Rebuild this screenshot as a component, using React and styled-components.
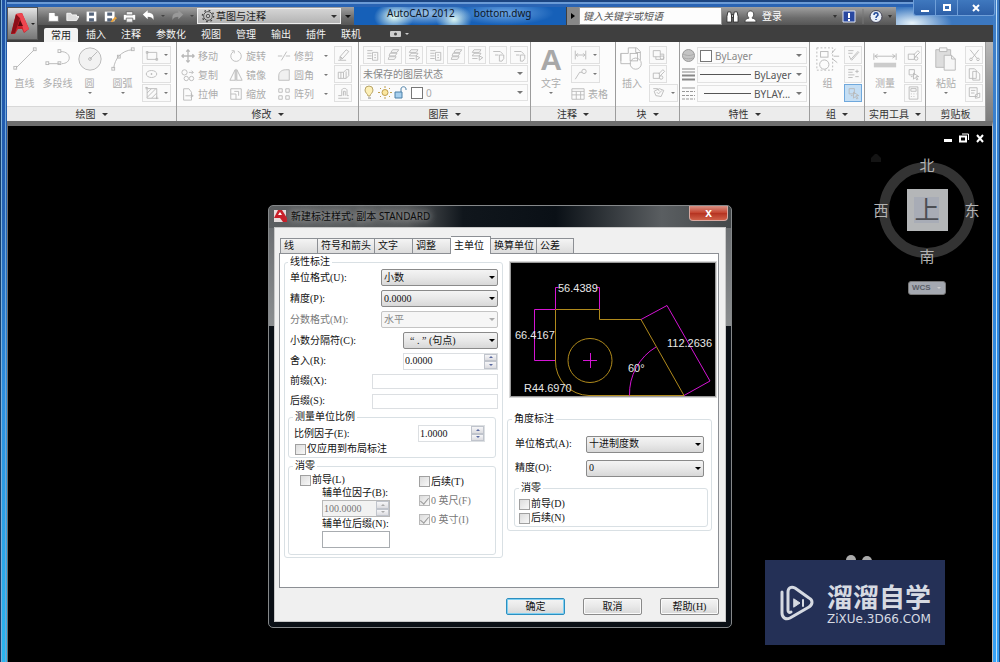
import React from 'react'
import styled, { createGlobalStyle, css } from 'styled-components'

const uiFont = '"Noto Sans", "Noto Sans CJK SC", sans-serif'
const dialogFont = '"Liberation Serif", "Noto Sans CJK SC", serif'

const GlobalStyle = createGlobalStyle`
  * {
    box-sizing: border-box;
  }
  body {
    margin: 0;
    background: #000;
    font: 10px/14px ${uiFont};
  }
  button, input, select {
    font: inherit;
    color: inherit;
    margin: 0;
    padding: 0;
    border: 0;
    background: none;
    border-radius: 0;
    outline: none;
  }
  select {
    appearance: none;
  }
  fieldset {
    margin: 0;
    min-width: 0;
  }
  svg {
    display: block;
    flex: none;
  }
`

/* ---------- application window ---------- */

const Window = styled.div`
  position: relative;
  display: flex;
  flex-direction: column;
  min-height: 100vh;
  padding: 7px 7px 0;
  background:
    linear-gradient(90deg, #17406f 1px, #7fb2dc 1px, #7fb2dc 2px, transparent 2px, transparent 5px, #6fa6d8 5px, #6fa6d8 6px, transparent 6px) left / 7px 100% no-repeat,
    linear-gradient(90deg, transparent 3px, #bfe0f8 3px, #bfe0f8 4px, transparent 4px, transparent 6px, #1d4a80 6px) right / 7px 100% no-repeat,
    linear-gradient(#3f7cc4, #2f86dc 45%, #36a2f6) right / 7px 100% no-repeat,
    linear-gradient(#1f52a4, #2462b4 32%, #2d90e0 60%, #2ab6ee) left / 7px 100% no-repeat,
    linear-gradient(#1b4480 2px, #6b9bd6 2px, #6b9bd6 4px, #2a64b4 4px);
`

const Header = styled.header`
  display: grid;
  grid-template-columns: 31px 1fr;
  grid-template-rows: 18px 17px;
  background: #3f3f3f;
`

const AppButton = styled.button`
  grid-row: 1 / 3;
  height: 33px;
  display: flex;
  align-items: center;
  gap: 1px;
  padding-left: 2px;
  border: 1px solid #555;
  background: linear-gradient(#e4e4e4, #a2a2a2 50%, #777);
`

const TitleRow = styled.div`
  display: flex;
  min-width: 0;
`

const GreyStrip = styled.div`
  display: flex;
  align-items: center;
  width: ${props => props.$width}px;
  padding-left: ${props => props.$pad || 0}px;
  gap: ${props => props.$gap || 0}px;
  color: #fff;
  background: linear-gradient(#a0a0a0, #6c6c6c 60%, #565656);

  a {
    color: inherit;
    text-decoration: none;
  }
`

const QuickButton = styled.button`
  width: 19px;
  height: 16px;
  display: flex;
  align-items: center;
  justify-content: center;
`

const HistoryMenu = styled.button`
  width: 10px;
  height: 16px;
  display: flex;
  align-items: center;
  justify-content: center;
`

const Workspace = styled.label`
  flex: 1;
  display: flex;
  align-items: center;
  height: 16px;
  padding: 0 3px;
  gap: 1px;
  color: #222;
  border: 1px solid #eee;
  background: linear-gradient(#d4d4d4, #b4b4b4);

  select {
    flex: 1;
    min-width: 0;
    font-size: 10px;
  }
`

const More = styled.button`
  width: 13px;
  height: 17px;
  display: flex;
  align-items: center;
  justify-content: center;
  color: #111;
`

const Caption = styled.div`
  flex: 1;
  display: flex;
  gap: 19px;
  padding-left: 33px;
  font-size: 10px;
  line-height: 12px;
  color: #0c1626;
  white-space: nowrap;
  background:
    radial-gradient(ellipse 20px 14px at 40px 10px, #e2fbf4, transparent),
    radial-gradient(ellipse 42px 12px at 70px 6px, #9fc4ea, transparent),
    radial-gradient(ellipse 18px 14px at 100px 12px, #e2fbf4, transparent),
    radial-gradient(ellipse 50px 12px at 150px 6px, #6fa6e2, transparent),
    #1660b8;
`

const Search = styled.input`
  width: 143px;
  height: 18px;
  padding-left: 3px;
  background: #fdfdfd;
  border: 1px solid #999;

  &::placeholder {
    color: #555;
    font-style: italic;
    opacity: 1;
  }
`

const Glass = styled.div`
  width: 97px;
  background:
    radial-gradient(ellipse 40px 16px at 16px 16px, #e8f4fa, transparent),
    #3c78c0;
`

const WindowControls = styled.div`
  position: absolute;
  top: 0;
  right: 5px;
  display: flex;
  border: 1px solid #6f9fd8;
  border-top: 0;
  border-radius: 0 0 3px 3px;
  overflow: hidden;

  button {
    width: 22px;
    height: 15px;
    display: flex;
    align-items: center;
    justify-content: center;
    background: linear-gradient(#3f78be, #2d60a8);
    border-right: 1px solid #6f9fd8;
  }
  button:last-child {
    width: 36px;
    border-right: 0;
  }
`

const Tabs = styled.nav`
  display: flex;
  padding-left: 6px;
  color: #f4f4f4;
`

const RibbonTab = styled.button`
  height: ${props => (props.$active ? 14 : 17)}px;
  padding: 0 7px 0 ${props => (props.$active ? 7 : 8)}px;
  align-self: flex-end;
  line-height: 14px;
  white-space: nowrap;
  border-radius: 2px 2px 0 0;
  ${props => props.$active && css`
    color: #222;
    background: #f4f4f4;
  `}
`

const PlayTab = styled.button`
  display: flex;
  align-items: center;
  gap: 4px;
  padding-left: 22px;
`

const Ribbon = styled.div`
  display: flex;
  height: 79px;
  background: linear-gradient(#b8b8b8, #7c7c7c);
`

const PanelBox = styled.section`
  display: flex;
  flex-direction: column;
  flex: none;
  width: ${props => props.$width}px;
  border-right: 1px solid #9c9c9c;
  background: #fcfcfc;
`

const PanelBody = styled.div`
  flex: 1;
  display: flex;
  padding: 4px 0 0 ${props => props.$pad}px;
  color: #acacac;
  white-space: nowrap;
`

const PanelTitle = styled.button`
  height: 15px;
  display: flex;
  align-items: center;
  justify-content: center;
  gap: 6px;
  color: #333;
  background: #ececec;
  border-top: 1px solid #d8d8d8;
`

const Caret = styled.i`
  flex: none;
  border: ${props => props.$size || 2}px solid transparent;
  border-top-color: ${props => props.$color || '#777'};
  border-bottom: 0;
`

const BigTool = styled.button`
  width: ${props => props.$width || 33}px;
  height: 56px;
  display: flex;
  flex-direction: column;
  align-items: center;
  line-height: 12px;

  > span {
    margin: 5px 0 3px;
  }
`

const BigLetter = styled.b`
  height: 26px;
  font: bold 30px/28px "Liberation Sans", sans-serif;
  color: #a8a8a8;
`

const ToolGrid = styled.div`
  display: grid;
  grid-template-columns: ${props => props.$columns};
  grid-auto-rows: 19px;
  align-content: start;
  margin-left: ${props => props.$left || 0}px;
`

const TextTool = styled.button`
  display: flex;
  align-items: center;
  gap: 3px;

  i {
    margin-left: 7px;
  }
`

const Square = styled.button`
  display: flex;
  align-items: center;
  justify-content: center;
  width: ${props => (props.$split ? 29 : 18)}px;
  height: 18px;
  border: 1px solid ${props => (props.$on ? '#6fa8dc' : '#e0e0e0')};
  background: ${props => (props.$on ? '#c4def4' : '#fafafa')};

  svg {
    width: ${props => (props.$split ? 17 : 15)}px;
  }
  i {
    margin: 0 2px 0 4px;
  }
`

const Rows = styled.div`
  flex: 1;
  display: grid;
  grid-auto-rows: 19px;
  align-content: start;
`

const IconStrip = styled.div`
  display: flex;
  gap: 3px;
  padding-left: 3px;
`

const Field = styled.label`
  height: 17px;
  margin-right: 2px;
  display: flex;
  align-items: center;
  gap: 3px;
  padding: 0 4px 0 2px;
  color: ${props => props.$color || '#888'};
  border: 1px solid #e2e2e2;
  background: #fbfbfb;

  select {
    flex: 1;
    min-width: 0;
  }
`

const Swatch = styled.span`
  width: 12px;
  height: 12px;
  border: 1px solid #777;
  background: #fff;
`

const Line = styled.span`
  width: ${props => props.$width}px;
  height: 1px;
  margin-left: ${props => props.$left || 0}px;
  background: #555;
`

const PropRow = styled.div`
  display: grid;
  grid-template-columns: 14px 1fr;
  align-items: center;
  gap: 1px;
`

/* ---------- drawing area ---------- */

const Canvas = styled.main`
  position: relative;
  flex: 1;
  min-height: 510px;
  border: solid #6f6f6f;
  border-width: 5px 1px 0;
  border-right-color: #c0b8b0;
  background: #000;
`

const DocControls = styled.div`
  position: absolute;
  top: 6px;
  right: 6px;
  display: flex;
  gap: 4px;

  button {
    width: 12px;
    height: 12px;
  }
`

const Compass = styled.div`
  position: absolute;
  top: 28px;
  right: 8px;
  width: 114px;
  color: #aaa;
`

const WcsButton = styled.button`
  display: flex;
  align-items: center;
  width: 38px;
  height: 14px;
  margin: 13px auto 0;
  padding-left: 3px;
  gap: 6px;
  border: 1px solid #777;
  border-radius: 3px;
  background: #a4a8b0;
  color: #5c6068;
  font: bold 8px/12px "Liberation Sans", sans-serif;
`

const Watermark = styled.div`
  position: absolute;
  right: 47px;
  bottom: 17px;
  width: 180px;
  height: 85px;
  display: flex;
  align-items: center;
  gap: 12px;
  padding-left: 14px;
  background: #243056;
  color: #d6dae2;
`

const Brand = styled.div`
  font: bold 26px/30px "Noto Sans CJK SC", sans-serif;
  white-space: nowrap;

  small {
    display: block;
    padding-top: 2px;
    font: 12px/12px "DejaVu Sans", sans-serif;
  }
`

const Dots = styled.svg`
  position: absolute;
  right: 118px;
  bottom: 98px;
`

/* ---------- dialog ---------- */

const Dialog = styled.section`
  position: absolute;
  top: 79px;
  left: 50%;
  width: 464px;
  margin-left: -232px;
  padding: 0 5px 5px;
  border: 1px solid #85888a;
  border-radius: 5px;
  font-family: ${dialogFont};
  color: #111;
  background:
    linear-gradient(#6c6f72, #8b8e90) left 22px / 5px 98px no-repeat,
    linear-gradient(#6c6f72, #8b8e90) right 22px / 5px 98px no-repeat,
    linear-gradient(90deg, #5c5f61, #55585a 30%, #10161c 42%, #0a1016 62%, #5a5e61 85%, #44484a) top / 100% 22px no-repeat,
    #0b1016;
`

const DialogTitle = styled.header`
  display: flex;
  height: 21px;
  font-family: ${uiFont};

  h1 {
    flex: 1;
    margin: 0;
    padding-left: 4px;
    font-size: 10px;
    font-weight: normal;
    line-height: 20px;
    color: #0c0c0c;
    text-shadow: 0 0 6px #a8a8a8, 0 0 9px #a0a0a0;
  }
  > svg {
    margin-top: 3px;
  }
`

const CloseButton = styled.button`
  width: 39px;
  height: 15px;
  margin-right: -2px;
  border: 1px solid #d8a8a0;
  border-top: 0;
  border-radius: 0 0 4px 4px;
  background: linear-gradient(#d89084, #c4412c 50%, #b43220 51%, #d06048);
  color: #fff;
  font: bold 12px/12px "Liberation Sans", sans-serif;
`

const Client = styled.div`
  padding: 8px 6px 6px 4px;
  border: 1px solid #c8c8c8;
  background: #f0f0f0;
`

const TabList = styled.div`
  display: flex;
  align-items: flex-end;
  height: 17px;
  padding-left: 1px;
`

const DialogTab = styled.button`
  width: ${props => props.$width}px;
  height: ${props => (props.$active ? 18 : 15)}px;
  margin-bottom: ${props => (props.$active ? -1 : 0)}px;
  padding-left: 3px;
  text-align: left;
  white-space: nowrap;
  border: 1px solid #8c8f94;
  border-bottom: 0;
  border-left-width: ${props => (props.$first ? 1 : 0)}px;
  background: ${props => (props.$active ? '#fff' : 'linear-gradient(#f4f4f4, #dcdcdc)')};
`

const TabPage = styled.div`
  display: flex;
  gap: 4px;
  height: 335px;
  padding: 3px 2px 0 4px;
  border: 1px solid #8c8f94;
  background: #fff;
`

const Group = styled.fieldset`
  border: 1px solid #d9e0e4;
  border-radius: 3px;
  margin: ${props => props.$margin || 0};
  padding: ${props => props.$padding || 0};

  legend {
    padding: 0 2px;
    margin-left: ${props => props.$legend ?? 4}px;
    line-height: 10px;
  }
`

const Column = styled.div`
  flex: none;
  width: ${props => props.$width}px;
  padding: ${props => props.$padding || 0};
`

const Row = styled.div`
  display: flex;
  align-items: center;
  justify-content: space-between;
  height: ${props => props.$height || 21}px;
  padding: 0 ${props => props.$right || 4}px 0 ${props => props.$left || 2}px;
  color: ${props => (props.$dim ? '#777' : 'inherit')};
`

const Pick = styled.span`
  position: relative;
  display: block;
  width: ${props => props.$width}px;

  select {
    display: block;
    width: 100%;
    height: 17px;
    padding-left: ${props => props.$indent || 2}px;
    border: 1px solid #8a8a8a;
    border-radius: 2px;
    background: linear-gradient(#f4f4f4, #e8e8e8 50%, #d8d8d8);
    color: #111;
    opacity: 1;
  }
  select:disabled {
    border-color: #c4c4c4;
    background: #f6f6f6;
    color: #888;
  }
  i {
    position: absolute;
    top: 7px;
    right: 3px;
    pointer-events: none;
  }
`

const TextInput = styled.input`
  width: ${props => props.$width}px;
  height: ${props => props.$height || 15}px;
  border: 1px solid ${props => (props.$strong ? '#a8acb0' : '#dcdfe2')};
  background: #fff;
`

const SpinBox = styled.span`
  display: flex;
  width: ${props => props.$width}px;
  height: 17px;
  color: ${props => (props.$dim ? '#777' : '#111')};
  border: 1px solid ${props => (props.$dim ? '#b8b8b8' : '#dcdfe2')};
  background: ${props => (props.$dim ? '#f2f2f2' : '#fff')};

  input {
    flex: 1;
    min-width: 0;
    padding-left: 1px;
  }
  div {
    display: flex;
    flex-direction: column;
    width: 13px;
  }
  button {
    flex: 1;
    display: flex;
    align-items: center;
    justify-content: center;
    border: 1px solid #c0c4cc;
    background: linear-gradient(#f6f6f8, #dcdce0);
  }
  button:first-child i {
    transform: rotate(180deg);
  }
`

const Check = styled.label`
  display: flex;
  align-items: center;
  gap: 1px;
  height: ${props => props.$height || 12}px;
  padding-left: ${props => props.$left || 0}px;
  color: ${props => (props.$dim ? '#777' : 'inherit')};
  white-space: nowrap;

  input {
    appearance: none;
    display: flex;
    justify-content: center;
    flex: none;
    width: 11px;
    height: 11px;
    border: 1px solid ${props => (props.$dim ? '#b8b8b8' : '#a0a0a0')};
    background: linear-gradient(135deg, #dcdcdc, #f8f8f8);
  }
  input:checked::before {
    content: '';
    width: 4px;
    height: 7px;
    border: solid #999;
    border-width: 0 1px 1px 0;
    transform: rotate(40deg);
  }
`

const ZeroGrid = styled.div`
  display: flex;
`

const SubUnit = styled.div`
  padding-left: 22px;
  white-space: nowrap;
`

const SubLabel = styled.label`
  display: block;
  line-height: 14px;
`

const Preview = styled.div`
  width: 206px;
  margin: 5px 0 17px 3px;
  border: 1px solid #999;
  outline: 1px solid #d8d8d8;
  background: #000;
`

const Actions = styled.footer`
  display: flex;
  justify-content: flex-end;
  gap: 18px;
  padding-top: 10px;
`

const PushButton = styled.button`
  width: 59px;
  height: 17px;
  line-height: 14px;
  border: 1px solid ${props => (props.$primary ? '#2c8fc0' : '#8a8a8a')};
  border-radius: 2px;
  box-shadow: inset 0 0 0 1px ${props => (props.$primary ? '#7fd0f2' : '#fafafa')};
  background: linear-gradient(#f4f4f4, #e8e8e8 50%, #d8d8d8);
`

/* ---------- icons ---------- */

const shapes = {
  line: <><path d="M4 24 24 4" /><rect x="2" y="22" width="3" height="3" /><rect x="23" y="2" width="3" height="3" /></>,
  polyline: <><path d="M4 19h12M17 6c12 0 12 13 1 13" /><rect x="1" y="17" width="3" height="3" /><rect x="14" y="17" width="3" height="3" /><rect x="14" y="4" width="3" height="3" /></>,
  circle: <><circle cx="14" cy="14" r="12" fill="#f2f2f2" /><path d="m14 14 8-8" /><circle cx="14" cy="14" r="1.5" /></>,
  arc: <><path d="M4 24C5 14 12 5 24 4" /><rect x="2" y="23" width="3" height="3" /><rect x="8" y="10" width="3" height="3" /><rect x="23" y="2" width="3" height="3" /></>,
  insert: <><path d="M2 16V8h8M10 8V2h9l4 4v9M2 8v11h11M18 2v5h5" /><circle cx="18" cy="19" r="6" /><rect x="12" y="8" width="8" height="8" /></>,
  group: <><path d="M2 2h17v24H2z" strokeDasharray="2 2" /><rect x="6" y="6" width="8" height="6" /><circle cx="10" cy="20" r="5" /><path d="m18 8 4-5M20 11h6M19 14l5 4" /></>,
  measure: <><path d="M2 8v7M26 8v7M3 11h22M6 9l-3 2 3 2M22 9l3 2-3 2" /><path fill="#ccc" stroke="none" d="M2 18h24v5H2z" /></>,
  paste: <><path fill="#ddd" d="M3 4h16v19H3z" /><path fill="#f6f6f6" d="M7 2h8v4H7zM12 10h8l4 4v12H12z" /><path d="M20 10v4h4" /></>,
  rect: <><path d="M3 5h11v8H3z" /><path d="M2 4h2v2H2zM13 12h2v2h-2z" /></>,
  ellipse: <><ellipse cx="8" cy="8" rx="6" ry="4" /><path d="M8 7v2M7 8h2" /></>,
  hatch: <><path d="M3 3h11v11H3zM3 8l5-5M3 13 13 3M8 14l6-6" /><path d="M1 2h3M2 1v3M13 14h3M14 12v3" /></>,
  move: <path d="M8 1v14M1 8h14M6 3l2-2 2 2M6 13l2 2 2-2M3 6 1 8l2 2M13 6l2 2-2 2" strokeWidth="1.5" />,
  copy: <><circle cx="4" cy="5" r="3" /><circle cx="6" cy="12" r="2.5" /><circle cx="12" cy="12" r="2.5" /><path d="M9 5h5M12 3l2 2-2 2" /></>,
  stretch: <path d="M3 2h6l3 4v9H3zM5 10h8M11 8l3 2-3 2" />,
  rotate: <path d="M10 2.500A6 6 0 1 1 5 3M3 2l3 0v3" />,
  mirror: <path d="M7 2v12H1zM9 2v12h6zM8 1v14" />,
  scale: <path d="M2 2h12v12H2zM2 8h6v6M6 5h5v5" />,
  trim: <path d="M1 8h5M10 8h5M5 13 11 3" />,
  fillet: <path d="M2 14V9c0-4 3-7 8-7h4v12z" fill="#f0f0f0" />,
  array: <path d="M2 2h4v4H2zM10 2h4v4h-4zM2 10h4v4H2zM10 10h4v4h-4z" />,
  erase: <path d="m4 10 7-8 3 2-7 8zM4 10l3 2-3 1zM2 14h9" />,
  explode: <path d="M2 6h6v7H2zM8 6l3-3h3v7l-3 3H8M5 6v7M11 5v8" />,
  offset: <path d="M2 14h12M2 11h4V5c0-3 6-3 6 0v6h2M8 11V6h2v5" />,
  layers: <path d="M7 2h7l-2 3H5zM4 6h8l-2 3H3zM3 10h8l-2 3H2z" />,
  layerDoc: <path d="M2 3h6M2 6h5M2 9h5M2 12h5M8 5h6v9H8zM10 8h2M10 11h2" />,
  layerArrow: <path d="M4 2h8l-2 3H2zM4 6h8l-2 3H2zM2 12h6M10 9v5l4-3z" />,
  layerPoly: <path d="M2 4h8l3 3M4 8h4M9 8h5v4l-2 3H9z" />,
  dimension: <path d="M2 3v10M14 3v10M3 8h10M5 6 3 8l2 2M11 6l2 2-2 2" />,
  leader: <><path d="M2 14 7 6h3" /><circle cx="12" cy="5" r="2.500" /></>,
  table: <path d="M1 2h14v12H1zM1 5h14M1 9h14M6 5v9M11 5v9" />,
  block: <><path d="M2 3h8v7H2zM5 10v3h9V7h-4" /><circle cx="12" cy="11" r="2" /></>,
  blockEdit: <><path d="M2 7h7v6H2zM8 8l5-5 2 2-5 5" /><circle cx="11" cy="12" r="2" /></>,
  tag: <path d="M2 3h5l2 3M9 3l5 2-3 7-6-1-2-5zM6 7l2 2 4-4" />,
  plus: <path d="M2 3h7M2 6h5M2 9h7M2 12h5M12 3v4M10 5h4M10 11h4" />,
  pencil: <path d="m5 13 8-9 1 1-8 9zM2 3h6M2 6h5M3 9l2 4" />,
  select: <path d="M3 3h6v6H3zM8 7v7l2-2 2 3 1-1-2-3h3zM5 11h2" />,
  calc: <path d="M3 1h10v14H3zM5 3h6v3H5zM5 9h1M8 9h1M11 9h0.500M5 12h1M8 12h1" />,
  cut: <><path d="m3 2 8 10M13 2 5 12" /><circle cx="4" cy="13" r="1.500" /><circle cx="12" cy="13" r="1.500" /></>,
  pages: <path d="M2 2h6l2 2v9H2zM6 5h5l3 3v7H6z" />,
  pageStyle: <path d="M2 2h9v10H2zM4 5h5M4 8h4M9 10l5-2v5l-5 1z" />,
}

const Icon = ({ name, size = 14, box = 16 }) => (
  <svg width={size} height={size} viewBox={`0 0 ${box} ${box}`} fill="none" stroke="#b8b8b8" strokeWidth="1" aria-hidden="true">
    {shapes[name]}
  </svg>
)

const LogoA = ({ size = 20 }) => (
  <svg width={size} height={size * 1.2} viewBox="0 0 20 24" aria-hidden="true">
    <path d="M1 22 6 2l6-1 7 16-5 4-2-4H8l-3 5z" fill="#c8202a" />
    <path d="M6 2 1 22l4-1 5-15z" fill="#8c0f18" />
    <path d="m6 2 6-1 7 16-5 3-4-14z" fill="#ee4650" />
    <path d="m8 14 2-6 3 6z" fill="#5c0a10" />
  </svg>
)

const DialogLogo = () => (
  <svg width="13" height="14" viewBox="0 0 13 14" aria-hidden="true">
    <path d="M0 1h12v12H0z" fill="#e6dede" />
    <path d="m0 9 4-8 4 0 5 8v4H9L6 9z" fill="#c8202a" />
    <path d="m4 6 2-3 2 3z" fill="#fff" />
  </svg>
)

const quick = {
  新建: <path d="M2 3h8l4 4v7H2zM10 3v4h4" fill="#fff" stroke="#777" />,
  打开: <path d="M1 13V4h5l1 2h6v2h3l-3 5z" fill="#ddd" stroke="#fff" />,
  保存: <><path d="M2 2h12v12H2z" fill="#fff" /><path d="M5 3h6v4H5zM5 10h6v4H5z" fill="#56657c" /></>,
  另存为: <><path d="M1 2h12v12H1z" fill="#fff" /><path d="M4 3h6v4H4zM4 10h6v4H4z" fill="#56657c" /><path d="m8 14 6-6 2 2-6 5z" fill="#e8a23c" /></>,
  打印: <><path d="M1 6h14v6H1z" fill="#fff" /><path d="M4 2h8v4H4zM4 10h8v5H4z" fill="#eee" stroke="#666" /></>,
}

const Arrow = ({ flip, color }) => (
  <svg width="13" height="12" viewBox="0 0 16 14" aria-hidden="true">
    <path transform={flip ? 'translate(16 0) scale(-1 1)' : undefined} d="M1 5 7 0v3c6 0 8 3 7 9-1-3-3-4-7-4v3z" fill={color} />
  </svg>
)

/* ---------- ribbon pieces ---------- */

const Panel = ({ title, width, pad = 1, plain, children }) => (
  <PanelBox $width={width}>
    <PanelBody $pad={pad}>{children}</PanelBody>
    <PanelTitle>{title}{!plain && <Caret $size={3} $color="#333" />}</PanelTitle>
  </PanelBox>
)

const Big = ({ icon, label, width, menu }) => (
  <BigTool $width={width}>
    {icon ? <Icon name={icon} size={26} box={28} /> : <BigLetter>A</BigLetter>}
    <span>{label}</span>
    {menu && <Caret />}
  </BigTool>
)

const Small = ({ icon, split, on, label }) => (
  <Square $split={split} $on={on} aria-label={label || icon}>
    <Icon name={icon} />
    {split && <Caret />}
  </Square>
)

const ribbonTabs = ['常用', '插入', '注释', '参数化', '视图', '管理', '输出', '插件', '联机']

const modifyTools = [
  ['move', '移动'], ['rotate', '旋转'], ['trim', '修剪', true],
  ['copy', '复制'], ['mirror', '镜像'], ['fillet', '圆角', true],
  ['stretch', '拉伸'], ['scale', '缩放'], ['array', '阵列', true],
]

const layerTools = ['layerDoc', 'layers', 'layerArrow', 'layerDoc', 'layers', 'layerArrow', 'layerPoly', 'layerPoly']

const AppRibbon = () => (
  <Ribbon>
    <Panel title="绘图" width={170}>
      <Big icon="line" label="直线" />
      <Big icon="polyline" label="多段线" />
      <Big icon="circle" label="圆" width={31} menu />
      <Big icon="arc" label="圆弧" width={35} menu />
      <ToolGrid $columns="29px" $left={2}>
        <Small icon="rect" split />
        <Small icon="ellipse" split />
        <Small icon="hatch" split />
      </ToolGrid>
    </Panel>
    <Panel title="修改" width={182} pad={4}>
      <ToolGrid $columns="48px 48px 57px">
        {modifyTools.map(([icon, label, menu]) => (
          <TextTool key={label}><Icon name={icon} />{label}{menu && <Caret />}</TextTool>
        ))}
      </ToolGrid>
      <ToolGrid $columns="18px">
        <Small icon="erase" />
        <Small icon="explode" />
        <Small icon="offset" />
      </ToolGrid>
    </Panel>
    <Panel title="图层" width={172}>
      <Rows>
        <IconStrip>
          {layerTools.map((icon, i) => <Small key={i} icon={icon} label={`图层工具 ${i + 1}`} />)}
        </IconStrip>
        <Field>
          <select aria-label="图层状态"><option>未保存的图层状态</option></select>
          <Caret $size={3} />
        </Field>
        <Field $color="#aaa">
          <svg width="45" height="15" viewBox="0 0 45 15" fill="none" aria-hidden="true">
            <path d="M5 11c0-2-3-3-3-6a4 4 0 0 1 8 0c0 3-3 4-3 6z" fill="#fdf0b8" stroke="#b8a468" />
            <path d="M5 13h3" stroke="#888" />
            <circle cx="22" cy="7.500" r="3" fill="#fbe7a0" stroke="#c0a050" />
            <path d="M22 1v2M22 12v2M15 7.500h2M27 7.500h2M17 3l1 1M26 11l1 1M17 12l1-1M26 4l1-1" stroke="#c0a050" />
            <path d="M32 7h7v6h-7z" fill="#a8d0ee" stroke="#4c80a8" />
            <path d="M38 7V4c0-3 5-3 5 0v1" stroke="#4c80a8" />
          </svg>
          <Swatch />
          <select aria-label="图层"><option>0</option></select>
          <Caret $size={3} />
        </Field>
      </Rows>
    </Panel>
    <Panel title="注释" width={85}>
      <Big label="文字" width={38} menu />
      <ToolGrid $columns="42px" $left={1}>
        <Small icon="dimension" split />
        <Small icon="leader" split />
        <TextTool><Icon name="table" />表格</TextTool>
      </ToolGrid>
    </Panel>
    <Panel title="块" width={64}>
      <Big icon="insert" label="插入" width={30} />
      <ToolGrid $columns="29px" $left={2}>
        <Small icon="block" />
        <Small icon="blockEdit" />
        <Small icon="tag" split />
      </ToolGrid>
    </Panel>
    <Panel title="特性" width={130} pad={2}>
      <Rows>
        <PropRow>
          <svg width="13" height="13" viewBox="0 0 13 13" aria-hidden="true">
            <circle cx="6.500" cy="6.500" r="6" fill="#c4c4c4" stroke="#999" />
            <path d="M1 5c4 2 8 2 11 0M2 9c3 1 6 1 9 0" stroke="#aaa" fill="none" />
          </svg>
          <Field>
            <Swatch />
            <select aria-label="颜色"><option>ByLayer</option></select>
            <Caret $size={3} />
          </Field>
        </PropRow>
        <PropRow>
          <svg width="13" height="13" viewBox="0 0 13 13" aria-hidden="true">
            <path d="M0 1h13M0 4h13" stroke="#888" />
            <path d="M0 7.500h13M0 11.500h13" stroke="#888" strokeWidth="2" />
          </svg>
          <Field $color="#555">
            <Line $width={51} />
            <select aria-label="线宽"><option>ByLayer</option></select>
            <Caret $size={3} />
          </Field>
        </PropRow>
        <PropRow>
          <svg width="13" height="13" viewBox="0 0 13 13" aria-hidden="true">
            <path d="M0 1h13" stroke="#999" />
            <path d="M0 4.500h13M0 8.500h13M0 12h13" stroke="#999" strokeDasharray="3 1" />
          </svg>
          <Field $color="#555">
            <Line $width={47} $left={4} />
            <select aria-label="线型"><option>BYLAY...</option></select>
            <Caret $size={3} />
          </Field>
        </PropRow>
      </Rows>
    </Panel>
    <Panel title="组" width={55}>
      <Big icon="group" label="组" />
      <ToolGrid $columns="18px">
        <Small icon="pencil" />
        <Small icon="plus" />
        <Small icon="select" on />
      </ToolGrid>
    </Panel>
    <Panel title="实用工具" width={61}>
      <Big icon="measure" label="测量" width={38} menu />
      <ToolGrid $columns="18px">
        <Small icon="blockEdit" />
        <Small icon="select" />
        <Small icon="calc" />
      </ToolGrid>
    </Panel>
    <Panel title="剪贴板" width={60} plain>
      <Big icon="paste" label="粘贴" width={38} menu />
      <ToolGrid $columns="18px">
        <Small icon="cut" />
        <Small icon="pages" />
        <Small icon="pageStyle" />
      </ToolGrid>
    </Panel>
  </Ribbon>
)

const AppHeader = () => (
  <Header>
    <AppButton aria-label="应用程序菜单"><LogoA size={20} /><Caret $color="#222" /></AppButton>
    <TitleRow>
      <GreyStrip $width={316} $pad={6}>
        {Object.keys(quick).map(name => (
          <QuickButton key={name} aria-label={name}>
            <svg width="13" height="13" viewBox="0 0 16 16" aria-hidden="true">{quick[name]}</svg>
          </QuickButton>
        ))}
        <QuickButton aria-label="放弃"><Arrow color="#fff" /></QuickButton>
        <HistoryMenu aria-label="放弃列表"><Caret $color="#444" /></HistoryMenu>
        <QuickButton aria-label="重做"><Arrow flip color="#999" /></QuickButton>
        <HistoryMenu aria-label="重做列表"><Caret $color="#444" /></HistoryMenu>
        <Workspace>
          <svg width="14" height="14" viewBox="0 0 16 16" fill="none" stroke="#444" aria-hidden="true">
            <circle cx="8" cy="8" r="5" />
            <circle cx="8" cy="8" r="2" />
            <circle cx="8" cy="8" r="6.500" strokeWidth="1.500" strokeDasharray="2 3.100" />
          </svg>
          <select aria-label="工作空间"><option>草图与注释</option></select>
          <Caret $size={3} $color="#333" />
        </Workspace>
        <More aria-label="自定义快速访问工具栏"><Caret $size={3} $color="#111" /></More>
      </GreyStrip>
      <Caption><span>AutoCAD 2012</span><span>bottom.dwg</span></Caption>
      <More as="div">
        <svg width="13" height="18" viewBox="0 0 13 18" aria-hidden="true">
          <path d="M1 0h12v18H1z" fill="#888" />
          <path d="m5 6 4 3-4 3z" fill="#000" />
        </svg>
      </More>
      <Search placeholder="键入关键字或短语" aria-label="搜索" />
      <GreyStrip $width={174} $pad={4} $gap={5}>
        <svg width="13" height="13" viewBox="0 0 14 14" fill="#fff" stroke="#333" aria-hidden="true">
          <path d="M2 2h3l1 4v7H1V7zM12 2H9L8 6v7h5V7zM6 5h2v3H6z" />
        </svg>
        <svg width="13" height="13" viewBox="0 0 14 14" fill="#fff" stroke="#444" aria-hidden="true">
          <path d="M1 13c0-3 2-4 4-4V8C2 5 4 1 7 1s5 4 2 7v1c2 0 4 1 4 4z" />
        </svg>
        <a href="#login">登录</a>
        <svg width="108" height="15" viewBox="0 0 108 15" aria-hidden="true">
          <path d="m46 6 4 0-2 3z" fill="#333" />
          <path d="M56 2h12v11H56z" fill="#2948a0" stroke="#dde4f4" />
          <path d="M62 4v5M62 10v2" stroke="#fff" strokeWidth="2" />
          <path d="M76 0v15" stroke="#777" />
          <circle cx="89" cy="7.500" r="6" fill="#e8eef8" stroke="#445" />
          <path d="M87 6c0-3 4-3 4 0 0 1-2 1-2 3M89 10v1" stroke="#234a98" fill="none" strokeWidth="1.500" />
          <path d="m101 6 4 0-2 3z" fill="#333" />
        </svg>
      </GreyStrip>
      <Glass />
    </TitleRow>
    <Tabs>
      {ribbonTabs.map((tab, i) => <RibbonTab key={tab} $active={i === 0}>{tab}</RibbonTab>)}
      <PlayTab aria-label="显示选项">
        <svg width="11" height="6" viewBox="0 0 11 6" aria-hidden="true">
          <rect width="11" height="6" rx="1" fill="#ccc" />
          <circle cx="5.500" cy="3" r="1.500" fill="#444" />
        </svg>
        <Caret $color="#ccc" />
      </PlayTab>
    </Tabs>
  </Header>
)

/* ---------- dialog pieces ---------- */

const Choice = ({ id, value, width, disabled, indent }) => (
  <Pick $width={width} $indent={indent}>
    <select id={id} disabled={disabled}><option>{value}</option></select>
    <Caret $size={3} $color={disabled ? '#aaa' : '#000'} />
  </Pick>
)

const Spinner = ({ id, value, width, dim }) => (
  <SpinBox $width={width} $dim={dim}>
    <input id={id} defaultValue={value} disabled={dim} />
    <div>
      <button aria-label="增加" disabled={dim}><Caret $color={dim ? '#aaa' : '#5868a0'} /></button>
      <button aria-label="减少" disabled={dim}><Caret $color={dim ? '#aaa' : '#5868a0'} /></button>
    </div>
  </SpinBox>
)

const Tick = ({ label, dim, ...rest }) => (
  <Check $dim={dim} {...rest}>
    <input type="checkbox" disabled={dim} defaultChecked={dim} />{label}
  </Check>
)

const dialogTabs = [
  ['线', 38], ['符号和箭头', 57], ['文字', 38], ['调整', 38], ['主单位', 40], ['换算单位', 46], ['公差', 37],
]

const DimensionPreview = () => (
  <Preview>
    <svg width="204" height="133" viewBox="1 1 204 133" fill="none" role="img" aria-label="预览">
      <path d="M45.500 47.500H89.500V57.500H131L174 133.500H79A34 34 0 0 1 45.500 99z" stroke="#b08a1c" />
      <circle cx="80" cy="98.500" r="22" stroke="#b08a1c" />
      <g stroke="#d414d4">
        <path d="M73 98.500h14M80.500 91v15" />
        <path d="M45.500 47V25.500h3M89.500 47V25.500h-3" />
        <path d="M45 47.500H24.500V98.500H45" />
        <path d="M131 57.500 157 43.500 200 119 174 133.500" />
        <path d="M146 85A55 55 0 0 0 119.500 133.500" />
      </g>
      <g fill="#e8e8e8" fontFamily="Liberation Sans, sans-serif" fontSize="11">
        <text x="48" y="30">56.4389</text>
        <text x="5" y="77">66.4167</text>
        <text x="157" y="85">112.2636</text>
        <text x="118" y="110">60°</text>
        <text x="14" y="130">R44.6970</text>
      </g>
    </svg>
  </Preview>
)

const StyleDialog = () => (
  <Dialog role="dialog" aria-labelledby="dialog-title">
    <DialogTitle>
      <DialogLogo />
      <h1 id="dialog-title">新建标注样式: 副本 STANDARD</h1>
      <CloseButton aria-label="关闭">x</CloseButton>
    </DialogTitle>
    <Client>
      <TabList role="tablist">
        {dialogTabs.map(([name, width], i) => (
          <DialogTab key={name} role="tab" $width={width} $first={i === 0} $active={name === '主单位'}>{name}</DialogTab>
        ))}
      </TabList>
      <TabPage>
        <Column $width={219}>
          <Group $padding="0 0 2px 3px" $legend={0}>
            <legend>线性标注</legend>
            <Row><label htmlFor="unit">单位格式(U):</label><Choice id="unit" value="小数" width={117} /></Row>
            <Row><label htmlFor="precision">精度(P):</label><Choice id="precision" value="0.0000" width={117} /></Row>
            <Row $dim><label htmlFor="fraction">分数格式(M):</label><Choice id="fraction" value="水平" width={117} disabled /></Row>
            <Row><label htmlFor="separator">小数分隔符(C):</label><Choice id="separator" value="“ . ”  (句点)" width={95} indent={6} /></Row>
            <Row $height={20}><label htmlFor="round">舍入(R):</label><Spinner id="round" value="0.0000" width={95} /></Row>
            <Row $height={20}><label htmlFor="prefix">前缀(X):</label><TextInput id="prefix" $width={126} /></Row>
            <Row $height={20}><label htmlFor="suffix">后缀(S):</label><TextInput id="suffix" $width={126} /></Row>
            <Group $margin="1px 6px 0 0" $padding="2px 0">
              <legend>测量单位比例</legend>
              <Row $height={19} $left={5} $right={10}>
                <label htmlFor="factor">比例因子(E):</label>
                <Spinner id="factor" value="1.0000" width={67} />
              </Row>
              <Tick label="仅应用到布局标注" $left={6} />
            </Group>
            <Group $margin="3px 6px 0 0" $padding="1px 0 6px">
              <legend>消零</legend>
              <ZeroGrid>
                <Column $width={130} $padding="2px 0 0 11px">
                  <Tick label="前导(L)" />
                  <SubUnit>
                    <SubLabel htmlFor="sub-factor">辅单位因子(B):</SubLabel>
                    <Spinner id="sub-factor" value="100.0000" width={68} dim />
                    <SubLabel htmlFor="sub-suffix">辅单位后缀(N):</SubLabel>
                    <TextInput id="sub-suffix" $width={68} $height={17} $strong />
                  </SubUnit>
                </Column>
                <Column>
                  <Tick label="后续(T)" $height={19} />
                  <Tick label="0 英尺(F)" $height={19} dim />
                  <Tick label="0 英寸(I)" $height={19} dim />
                </Column>
              </ZeroGrid>
            </Group>
          </Group>
        </Column>
        <Column $width={209}>
          <DimensionPreview />
          <Group $padding="8px 3px 3px" $margin="0 4px 0 0" $legend={1}>
            <legend>角度标注</legend>
            <Row $height={24} $left={4}><label htmlFor="angle-unit">单位格式(A):</label><Choice id="angle-unit" value="十进制度数" width={118} /></Row>
            <Row $height={24} $left={4}><label htmlFor="angle-precision">精度(O):</label><Choice id="angle-precision" value="0" width={118} /></Row>
            <Group $margin="3px 0 0 3px" $padding="4px 4px 1px" $legend={0}>
              <legend>消零</legend>
              <Tick label="前导(D)" $height={14} />
              <Tick label="后续(N)" $height={14} />
            </Group>
          </Group>
        </Column>
      </TabPage>
      <Actions>
        <PushButton $primary>确定</PushButton>
        <PushButton>取消</PushButton>
        <PushButton>帮助(H)</PushButton>
      </Actions>
    </Client>
  </Dialog>
)

const ViewCube = () => (
  <Compass>
    <svg width="114" height="114" viewBox="870 155 114 114" aria-hidden="true">
      <path d="m871 159 5-5 5 5v4h-10z" fill="#141414" />
      <circle cx="927" cy="211" r="43" fill="none" stroke="#333" strokeWidth="10" />
      <rect x="907" y="190" width="41" height="42" fill="#b4b6b8" />
      <rect x="914" y="198" width="25" height="26" fill="#a8acb6" />
      <g fill="#b4b4b4" fontFamily="Noto Sans CJK SC, sans-serif" fontSize="15" textAnchor="middle">
        <text x="927" y="172">北</text>
        <text x="927" y="263">南</text>
        <text x="881" y="217">西</text>
        <text x="972" y="217">东</text>
        <text x="927" y="220" fontSize="25" fill="#4c4e54">上</text>
      </g>
    </svg>
    <WcsButton>WCS<Caret $color="#ccc" /></WcsButton>
  </Compass>
)

const App = () => (
  <>
    <GlobalStyle />
    <Window>
      <AppHeader />
      <WindowControls>
        <button aria-label="最小化"><svg width="10" height="10"><path d="M1 7h8v2H1z" fill="#fff" /></svg></button>
        <button aria-label="还原"><svg width="10" height="10"><path d="M2 2h6v5H2z" fill="none" stroke="#fff" strokeWidth="2" /></svg></button>
        <button aria-label="关闭窗口"><svg width="10" height="10"><path d="m2 2 6 6M8 2 2 8" stroke="#fff" strokeWidth="2" /></svg></button>
      </WindowControls>
      <AppRibbon />
      <Canvas>
        <DocControls>
          <button aria-label="最小化图形"><svg width="12" height="12"><path d="M2 7h8v3H2z" fill="#fff" /></svg></button>
          <button aria-label="还原图形"><svg width="12" height="12" fill="none" stroke="#fff"><path d="M2 4.500h6v5H2z" strokeWidth="2" /><path d="M4 2h6.500v6" /></svg></button>
          <button aria-label="关闭图形"><svg width="12" height="12"><path d="m3 3 6 7M9 3l-6 7" stroke="#fff" strokeWidth="2" /></svg></button>
        </DocControls>
        <ViewCube />
        <Dots width="30" height="12" aria-hidden="true">
          <circle cx="7" cy="8" r="5" fill="#aaa" />
          <circle cx="23" cy="9" r="5" fill="#aaa" />
        </Dots>
        <Watermark>
          <svg width="36" height="38" viewBox="0 0 36 38" fill="none" stroke="#d6dae2" strokeWidth="3" strokeLinecap="round" strokeLinejoin="round" aria-hidden="true">
            <path d="M3 8v21c0 5 4 7 8 5l19-11c4-3 4-7 0-9L16 4c-4-2-7 0-7 4v18c0 2 1 3 3 2" />
            <path d="m15 15 6 4-6 4z" fill="#d6dae2" strokeWidth="1" />
            <path d="M24 16v6" strokeWidth="2" />
          </svg>
          <Brand>溜溜自学<small>ZiXUe.3D66.COM</small></Brand>
        </Watermark>
        <StyleDialog />
      </Canvas>
    </Window>
  </>
)

export default App
